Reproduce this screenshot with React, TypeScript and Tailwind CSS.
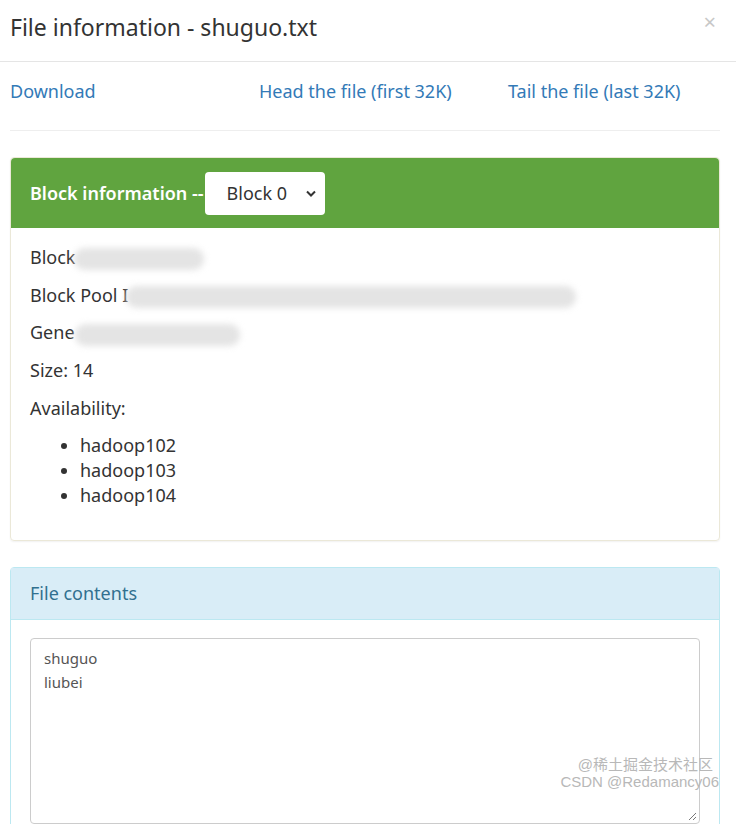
import React from "react";

const Blur: React.FC<{ w: number; className?: string }> = ({ w, className }) => (
  <span
    className={`inline-block align-middle h-[22px] rounded-full bg-[#e4e4e4] blur-[3px] ${className ?? ""}`}
    style={{ width: w }}
  />
);

const App: React.FC = () => {
  return (
    <div className="w-[736px] h-[824px] overflow-hidden bg-white text-[#333] font-['Segoe_UI','Noto_Sans',sans-serif]">
      {/* modal header */}
      <div className="h-[62px] flex items-start justify-between pl-[10px] pr-[20px] pt-[11px] border-b border-[#e5e5e5]">
        <h4 className="text-[23px] leading-[32px] text-[#333]">File information - shuguo.txt</h4>
        <span className="text-[22px] leading-none text-[#c8c8c8] mt-[-1px]">×</span>
      </div>

      <div className="pl-[10px] pr-[16px]">
        <div className="grid grid-cols-[249px_249px_1fr] h-[68px] items-start pt-[17px] text-[18px] leading-[25px] text-[#337ab7]">
          <a>Download</a>
          <a>Head the file (first 32K)</a>
          <a>Tail the file (last 32K)</a>
        </div>
        <hr className="border-t border-[#eee]" />

        {/* block info panel */}
        <div className="mt-[26px] border border-[#ebe8d8] rounded-[4px] shadow-[0_1px_2px_rgba(0,0,0,0.06)]">
          <div className="h-[70px] bg-[#60a43f] rounded-t-[4px] flex items-center pl-[19px] gap-[1px]">
            <span className="text-[18px] font-semibold text-white">Block information --</span>
            <div className="w-[120px] h-[43px] bg-white rounded-[4px] flex items-center justify-between pl-[22px] pr-[7px] text-[18px] text-[#333]">
              <span>Block 0</span>
              <svg width="14" height="14" viewBox="0 0 14 14" fill="none" stroke="#333" strokeWidth="2">
                <path d="M3 5.5 L7 9.5 L11 5.5" />
              </svg>
            </div>
          </div>
          <div className="pl-[19px] pt-[17px] pb-[32px] text-[18px] leading-[25px]">
            <p className="mb-[12.5px]">
              Block <Blur w={130} className="-ml-[6px]" />
            </p>
            <p className="mb-[12.5px]">
              Block Pool I<Blur w={450} className="-ml-[2px]" />
            </p>
            <p className="mb-[12.5px]">
              Gene<Blur w={165} />
            </p>
            <p className="mb-[12.5px]">Size: 14</p>
            <p className="mb-[12.5px]">Availability:</p>
            <ul className="list-disc pl-[50px]">
              <li>hadoop102</li>
              <li>hadoop103</li>
              <li>hadoop104</li>
            </ul>
          </div>
        </div>

        {/* file contents panel */}
        <div className="mt-[26px] border border-[#bce8f1] rounded-t-[4px] h-[300px]">
          <div className="h-[52px] bg-[#d9edf7] border-b border-[#bce8f1] flex items-center pl-[19px] text-[18px] text-[#31708f]">
            File contents
          </div>
          <div className="pt-[18px] pl-[19px] pr-[19px]">
            <div className="relative h-[186px] border border-[#ccc] rounded-[4px] px-[13px] py-[7px] text-[15px] leading-[24px] text-[#555]">
              <div>shuguo</div>
              <div>liubei</div>
              <div className="absolute right-[-20px] top-[117px] text-right text-[15px] leading-[17px] text-[#b8b8b8] font-['Liberation_Sans','Noto_Sans_CJK_SC',sans-serif]">
                <div className="pr-[6px]">@稀土掘金技术社区</div>
                <div>CSDN @Redamancy06</div>
              </div>
              {/* resize handle */}
              <svg
                className="absolute right-[2px] bottom-[2px]"
                width="10"
                height="10"
                viewBox="0 0 10 10"
                fill="none"
                stroke="#777"
                strokeWidth="1"
              >
                <path d="M9 2 L2 9 M9 6 L6 9" />
              </svg>
            </div>
          </div>
        </div>
      </div>
    </div>
  );
};

export default App;
